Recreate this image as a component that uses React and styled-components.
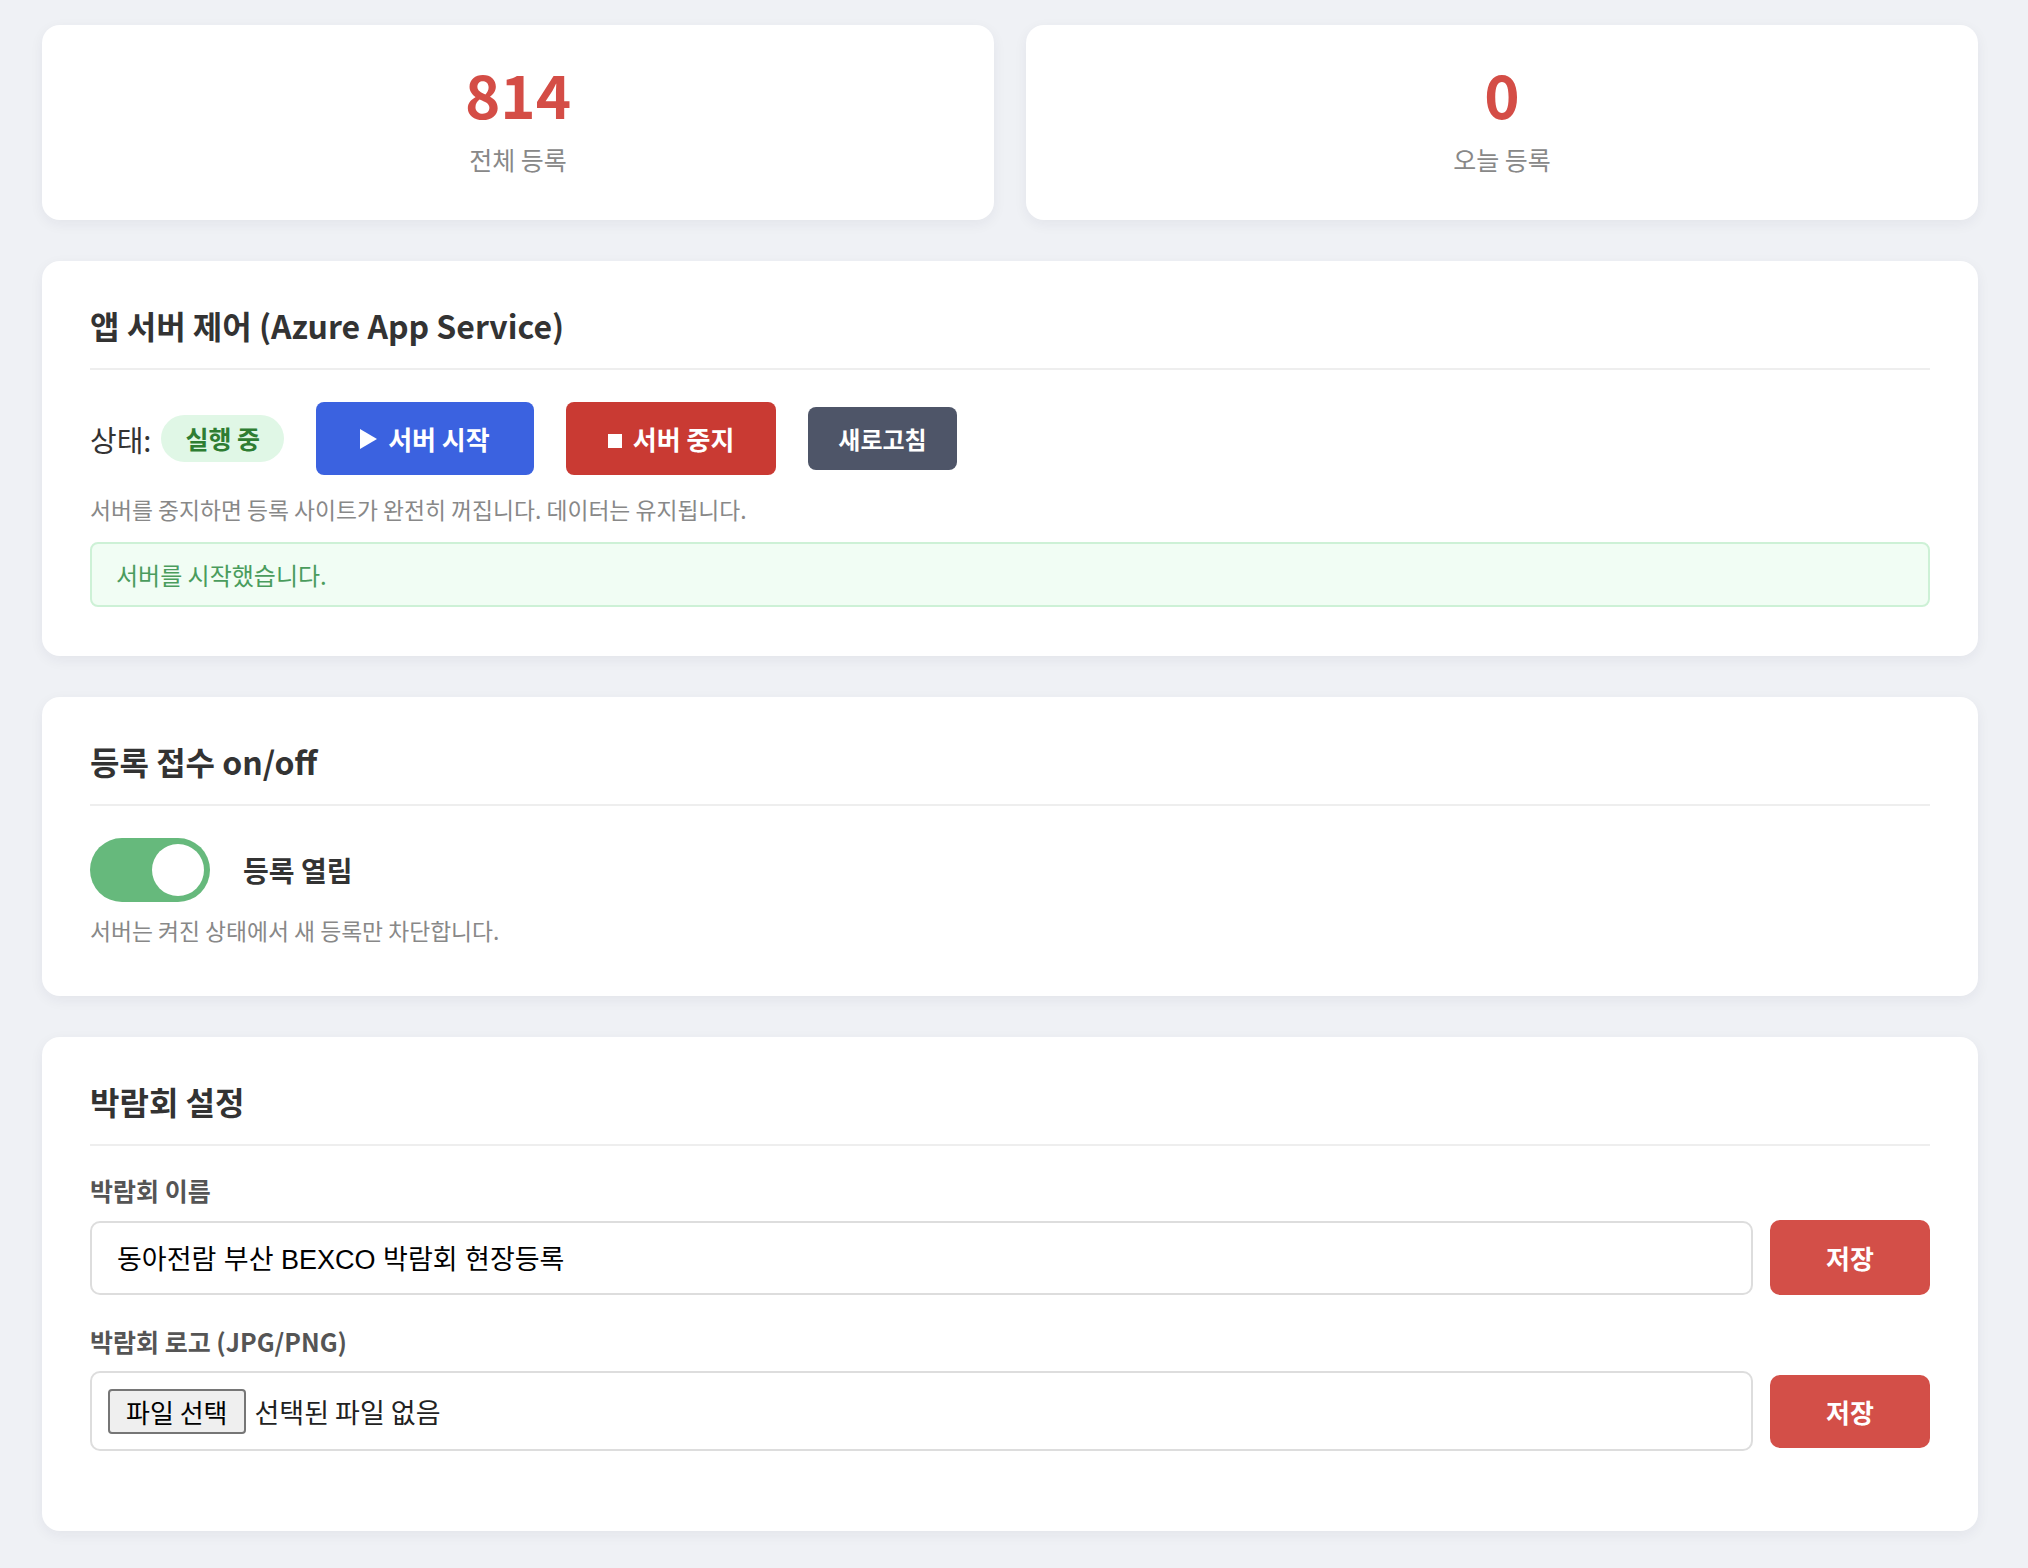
import React from "react";
import styled, { createGlobalStyle } from "styled-components";

const GlobalStyle = createGlobalStyle`
  * { box-sizing: border-box; }
  html, body { margin: 0; padding: 0; }
  body {
    background: #eff1f5;
    font-family: "Noto Sans CJK KR", "Noto Sans", sans-serif;
    color: #333;
  }
`;

const Page = styled.div`
  min-height: 100vh;
  padding: 25px 50px 40px 42px;
  display: flex;
  flex-direction: column;
  gap: 41px;
`;

const StatsRow = styled.div`
  display: grid;
  grid-template-columns: 1fr 1fr;
  gap: 32px;
`;

const StatCard = styled.div`
  background: #fff;
  border-radius: 18px;
  box-shadow: 0 4px 14px rgba(30, 40, 70, 0.06);
  height: 195px;
  padding-top: 32px;
  display: flex;
  flex-direction: column;
  align-items: center;
`;

const StatNumber = styled.div`
  font-size: 60px;
  font-weight: 700;
  line-height: 72px;
  color: #d44d46;
`;

const StatLabel = styled.div`
  margin-top: 12px;
  font-size: 25px;
  color: #888;
`;

const Card = styled.section`
  background: #fff;
  border-radius: 18px;
  box-shadow: 0 4px 14px rgba(30, 40, 70, 0.06);
  padding: 41px 48px 49px;
`;

const CardTitle = styled.h2`
  margin: 0 0 ${(p) => p.$gap ?? 32}px;
  padding-bottom: 20px;
  border-bottom: 2px solid #eee;
  font-size: 32px;
  font-weight: 700;
  color: #333;
`;

const StatusRow = styled.div`
  display: flex;
  align-items: center;
  gap: 32px;
`;

const StatusGroup = styled.div`
  display: flex;
  align-items: center;
  gap: 10px;
`;

const StatusLabel = styled.span`
  font-size: 29px;
  color: #333;
`;

const Badge = styled.span`
  display: inline-block;
  height: 47px;
  line-height: 47px;
  padding: 0 24px;
  border-radius: 24px;
  background: #e0f7e6;
  color: #2e7d32;
  font-size: 25px;
  font-weight: 700;
`;

const variants = {
  blue: { bg: "#3b62e0", h: 73, fs: 26, px: 44 },
  red: { bg: "#c93a33", h: 73, fs: 26, px: 42 },
  gray: { bg: "#4e5568", h: 63, fs: 24, px: 30 },
};

const ControlButton = styled.button`
  display: inline-flex;
  align-items: center;
  gap: 11px;
  height: ${(p) => variants[p.$variant].h}px;
  padding: 0 ${(p) => variants[p.$variant].px}px;
  border: none;
  border-radius: 8px;
  background: ${(p) => variants[p.$variant].bg};
  color: #fff;
  font-family: inherit;
  font-size: ${(p) => variants[p.$variant].fs}px;
  font-weight: 700;
  cursor: pointer;
`;

const PlayIcon = styled.span`
  width: 0;
  height: 0;
  border-top: 10.5px solid transparent;
  border-bottom: 10.5px solid transparent;
  border-left: 17px solid #fff;
`;

const StopIcon = styled.span`
  width: 14px;
  height: 14px;
  background: #fff;
  margin-top: 4px;
`;

const Hint = styled.p`
  margin: ${(p) => p.$top ?? 18}px 0 0;
  font-size: 22.8px;
  color: #888;
`;

const Message = styled.div`
  margin-top: 16px;
  height: 65px;
  padding: 0 24px;
  display: flex;
  align-items: center;
  border: 2px solid #cdf1d6;
  border-radius: 8px;
  background: #f1fdf4;
  color: #4a9c5d;
  font-size: 24px;
`;

const ToggleRow = styled.div`
  display: flex;
  align-items: center;
  gap: 33px;
`;

const Toggle = styled.div`
  position: relative;
  width: 120px;
  height: 64px;
  border-radius: 32px;
  background: ${(p) => (p.$on ? "#66b97c" : "#ccc")};
`;

const Knob = styled.span`
  position: absolute;
  top: 6px;
  ${(p) => (p.$on ? "right: 6px;" : "left: 6px;")}
  width: 52px;
  height: 52px;
  border-radius: 50%;
  background: #fff;
`;

const ToggleLabel = styled.span`
  font-size: 28px;
  font-weight: 700;
  color: #333;
`;

const FieldGroup = styled.div`
  margin-bottom: 28px;
  &:last-child {
    margin-bottom: 31px;
  }
`;

const FieldLabel = styled.label`
  display: block;
  margin-bottom: 12px;
  font-size: 25px;
  font-weight: 700;
  color: #555;
`;

const FieldRow = styled.div`
  display: flex;
  align-items: center;
  gap: 17px;
`;

const TextInput = styled.input`
  flex: 1;
  height: 74px;
  padding: 0 25px;
  border: 2px solid #ddd;
  border-radius: 10px;
  font-family: "Liberation Sans", "Noto Sans CJK KR", sans-serif;
  font-size: 27px;
  color: #000;
  outline: none;
`;

const FileBox = styled.div`
  flex: 1;
  height: 80px;
  padding: 0 16px;
  display: flex;
  align-items: center;
  gap: 9px;
  border: 2px solid #ddd;
  border-radius: 10px;
`;

const FileButton = styled.button`
  height: 45px;
  padding: 0 16px;
  border: 2px solid #767676;
  border-radius: 4px;
  background: #efefef;
  color: #000;
  font-family: inherit;
  font-size: 26px;
`;

const FileName = styled.span`
  font-size: 27px;
  color: #222;
`;

const SaveButton = styled.button`
  width: 160px;
  height: ${(p) => p.$h}px;
  border: none;
  border-radius: 10px;
  background: #d34f48;
  color: #fff;
  font-family: inherit;
  font-size: 26px;
  font-weight: 700;
  cursor: pointer;
`;

export default function App() {
  return (
    <>
      <GlobalStyle />
      <Page>
        <StatsRow>
          <StatCard>
            <StatNumber>814</StatNumber>
            <StatLabel>전체 등록</StatLabel>
          </StatCard>
          <StatCard>
            <StatNumber>0</StatNumber>
            <StatLabel>오늘 등록</StatLabel>
          </StatCard>
        </StatsRow>

        <Card>
          <CardTitle>앱 서버 제어 (Azure App Service)</CardTitle>
          <StatusRow>
            <StatusGroup>
              <StatusLabel>상태:</StatusLabel>
              <Badge>실행 중</Badge>
            </StatusGroup>
            <ControlButton $variant="blue">
              <PlayIcon />
              서버 시작
            </ControlButton>
            <ControlButton $variant="red">
              <StopIcon />
              서버 중지
            </ControlButton>
            <ControlButton $variant="gray">새로고침</ControlButton>
          </StatusRow>
          <Hint>서버를 중지하면 등록 사이트가 완전히 꺼집니다. 데이터는 유지됩니다.</Hint>
          <Message>서버를 시작했습니다.</Message>
        </Card>

        <Card>
          <CardTitle>등록 접수 on/off</CardTitle>
          <ToggleRow>
            <Toggle $on>
              <Knob $on />
            </Toggle>
            <ToggleLabel>등록 열림</ToggleLabel>
          </ToggleRow>
          <Hint $top={12}>서버는 켜진 상태에서 새 등록만 차단합니다.</Hint>
        </Card>

        <Card>
          <CardTitle $gap={26}>박람회 설정</CardTitle>
          <FieldGroup>
            <FieldLabel>박람회 이름</FieldLabel>
            <FieldRow>
              <TextInput defaultValue="동아전람 부산 BEXCO 박람회 현장등록" />
              <SaveButton $h={75}>저장</SaveButton>
            </FieldRow>
          </FieldGroup>
          <FieldGroup>
            <FieldLabel>박람회 로고 (JPG/PNG)</FieldLabel>
            <FieldRow>
              <FileBox>
                <FileButton type="button">파일 선택</FileButton>
                <FileName>선택된 파일 없음</FileName>
              </FileBox>
              <SaveButton $h={73}>저장</SaveButton>
            </FieldRow>
          </FieldGroup>
        </Card>
      </Page>
    </>
  );
}
